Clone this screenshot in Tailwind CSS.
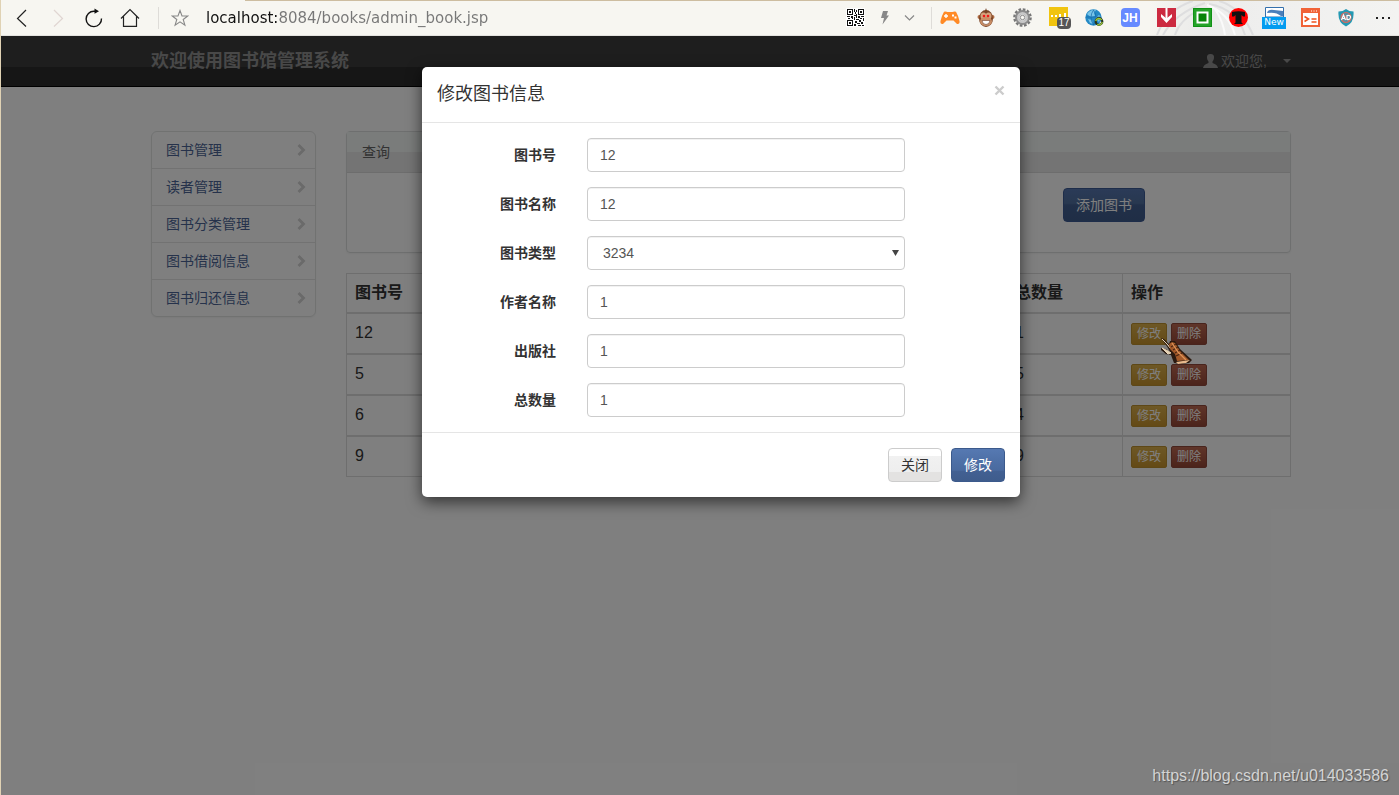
<!DOCTYPE html>
<html lang="zh-CN">
<head>
<meta charset="utf-8">
<title>图书馆管理系统</title>
<script src="https://cdn.jsdelivr.net/npm/@tailwindcss/browser@4"></script>
</head>
<body class="flex min-h-screen flex-col border-l border-[#e0d2b4] bg-white font-['Liberation_Sans','Noto_Sans_CJK_SC',sans-serif] text-sm text-[#333]">

<!-- Browser toolbar -->
<div class="relative flex h-9 shrink-0 items-center border-b border-[#e4e3df] bg-[#f7f6f1]">
  <div class="absolute top-0 right-0 left-[244px] h-px bg-[#cdbda0]"></div>
  <svg class="absolute top-px right-0 h-[34px] w-[250px]" viewBox="0 0 250 34" preserveAspectRatio="none" aria-hidden="true">
    <defs><linearGradient id="haze"><stop offset="0" stop-color="#e9e9e7" stop-opacity="0"/><stop offset=".2" stop-color="#ececeb"/><stop offset=".45" stop-color="#efefee"/><stop offset="1" stop-color="#f3f3f1"/></linearGradient></defs>
    <path d="M0 0h250v34H0z" fill="url(#haze)"/>
    <path d="M8 34Q18 8 44 0M14 34Q26 12 56 2M60 3Q88 8 96 34M70 0Q92 6 104 34M48 10Q30 20 26 34" fill="none" stroke="#dededf" stroke-width="2"/>
    <path d="M58 4Q80 12 86 34M66 8Q74 20 76 34" fill="none" stroke="#fafafa" stroke-width="2"/>
  </svg>
  <nav class="relative ml-[3px] flex items-center" aria-label="浏览器">
    <button aria-label="后退" class="flex w-9 justify-center"><svg width="18" height="18" viewBox="0 0 18 18" fill="none" stroke="#222" stroke-width="1.2"><path d="M13 1 4.500 9.500 13 17.500"/></svg></button>
    <button aria-label="前进" class="flex w-9 justify-center"><svg width="18" height="18" viewBox="0 0 18 18" fill="none" stroke="#e0d6d2" stroke-width="1.2"><path d="M5 1l8.500 8.500L5 17.500"/></svg></button>
    <button aria-label="刷新" class="flex w-9 justify-center"><svg width="20" height="20" viewBox="0 0 20 20" fill="none" stroke="#111" stroke-width="1.4"><path d="M17.500 10.500a7.700 7.700 0 1 1-7.500-7.300h2"/><path d="M10.500.5 15 3.200l-4.500 2.600z" fill="#111" stroke="none"/></svg></button>
    <button aria-label="主页" class="flex w-9 justify-center"><svg width="20" height="20" viewBox="0 0 20 20" fill="none" stroke="#222" stroke-width="1.2"><path d="M1 10.500 10 1.500l9 9M3.500 8.500v9.900h13V8.500"/></svg></button>
  </nav>
  <div class="relative ml-[10px] h-[22px] w-px bg-[#dedcd8]"></div>
  <button aria-label="收藏" class="relative ml-[3px] flex w-9 justify-center"><svg width="18" height="18" viewBox="0 0 18 18" fill="none" stroke="#888" stroke-width="1.100"><path d="m9 1.500 2 5.500h5.700l-4.500 3.500 1.700 5.700L9 12.800l-4.900 3.400 1.700-5.700L1.300 7H7z"/></svg></button>
  <input aria-label="地址" value="localhost:8084/books/admin_book.jsp" class="relative ml-2 h-7 min-w-0 flex-1 bg-[linear-gradient(90deg,#111_73px,#777_73px)] bg-clip-text pt-px font-['DejaVu_Sans',sans-serif] text-[15px] text-transparent outline-none">
  <div class="relative flex items-center">
    <button aria-label="二维码" class="flex w-8 justify-center"><svg width="19" height="19" viewBox="-1 -1 19 19" shape-rendering="crispEdges"><path d="M-1-1h19v19H-1z" fill="#fff"/><g fill="none" stroke="#111"><path d="M.5.5h5v5h-5zM11.500.5h5v5h-5zM.5 11.500h5v5h-5z"/></g><path fill="#111" d="M2 2h2v2H2zM13 2h2v2h-2zM2 13h2v2H2zM7 0h1v3H7zM9 1h1v2H9zM8 3h1v2H8zM7 6h2v1H7zM0 7h3v1H0zM4 7h2v2H4zM1 9h2v1H1zM7 8h1v3H7zM9 5h1v4H9zM11 7h2v2h-2zM14 7h3v1h-3zM13 9h2v1h-2zM16 9h1v3h-1zM9 10h3v1H9zM12 11h2v2h-2zM8 12h2v2H8zM10 14h3v1h-3zM14 13h2v2h-2zM7 15h2v2H7zM11 16h3v1h-3zM15 16h2v1h-2zM5 9h1v1H5z"/></svg></button>
    <button aria-label="闪电" class="flex w-7 justify-center"><svg width="10" height="14" viewBox="0 0 10 14"><path d="M3 0h5L6.500 4.500H9L2.500 13.500 4 7H1z" fill="#888"/></svg></button>
    <button aria-label="展开" class="flex w-5 justify-center"><svg width="11" height="8" viewBox="0 0 11 8" fill="none" stroke="#888" stroke-width="1.200"><path d="m1 1.500 4.500 4.500L10 1.500"/></svg></button>
    <div class="ml-3 h-[22px] w-px bg-[#dedcd8]"></div>
    <button aria-label="游戏" class="flex w-9 justify-center"><svg width="20" height="14" viewBox="0 0 20 14"><path d="M4 .7Q6 0 7.500 1h5Q14 0 16 .7q2.500 4.300 3.500 9.300.5 3.500-2.500 3L13.500 9.500h-7L3 13q-3 .5-2.500-3Q1.500 5 4 .7z" fill="#ff8a26"/><path d="M6 3v4M4 5h4" stroke="#fff" stroke-width="1.400"/><path d="M12 3.500h2v2h-2zM14.500 5.500h2v2h-2z" fill="#fff"/></svg></button>
    <button aria-label="猴子" class="flex w-9 justify-center"><svg width="18" height="20" viewBox="0 0 18 20"><path d="M9 0l1 3H8z" fill="#6b371b"/><circle cx="2.500" cy="9" r="2" fill="#b16d43"/><circle cx="15.500" cy="9" r="2" fill="#b16d43"/><ellipse cx="9" cy="10.500" rx="7" ry="8.500" fill="#7a4325"/><ellipse cx="6.500" cy="8" rx="3" ry="3.500" fill="#d6a27c"/><ellipse cx="11.500" cy="8" rx="3" ry="3.500" fill="#d6a27c"/><ellipse cx="9" cy="13.500" rx="6" ry="4.500" fill="#c98e66"/><path d="M5 12.500h8q-.5 4-4 4t-4-4z" fill="#fff" stroke="#70402a" stroke-width=".6"/><circle cx="7" cy="8" r="1.300" fill="#f01818"/><circle cx="11" cy="8" r="1.300" fill="#f01818"/></svg></button>
    <button aria-label="设置" class="flex w-9 justify-center"><svg width="19" height="19" viewBox="0 0 19 19"><circle cx="9.500" cy="9.500" r="8" fill="none" stroke="#777" stroke-width="2.600" stroke-dasharray="2.600 1.590"/><circle cx="9.500" cy="9.500" r="5.500" fill="#ddd" stroke="#8c8c8c" stroke-width="4"/><circle cx="9.500" cy="9.500" r="4.500" fill="none" stroke="#c8c8c8" stroke-width="2"/><circle cx="9.500" cy="9.500" r="2.200" fill="#f7f6f1" stroke="#777" stroke-width=".8"/></svg></button>
    <button aria-label="消息 17" class="relative flex h-[22px] w-9 justify-center"><svg width="19" height="19" viewBox="0 0 19 19"><path d="M0 0h19v19H0z" fill="#f1c40f"/><path d="M2 8h2v2H2zM6 8h2v2H6zM10 7h2v3h-2zM15 6h2v4h-2z" fill="#fff"/></svg><span class="absolute top-[10px] left-[17px] flex h-3 w-[14px] items-center justify-center rounded-sm bg-[#555] text-[10px] leading-none text-white">17</span></button>
    <button aria-label="网络" class="flex w-9 justify-center"><svg width="19" height="18" viewBox="0 0 19 18"><circle cx="8.500" cy="8.500" r="8.200" fill="#2489c5"/><path d="M2 5q4-5 9-4l-2 3 1 3-4 1-3-2zM10 9l4-3 2 2-2 5zM3 10l4 1 1 4-3-1z" fill="#78c4e8"/><path d="M1 8h15M8.500 1q-5 7 0 15M8.500 1q5 7 0 15" stroke="#1469a8" stroke-width=".7" fill="none"/><circle cx="14" cy="12.500" r="3.300" fill="none" stroke="#26351e" stroke-width="2.200"/><path d="M10.700 12a3.300 3.300 0 0 1 6-1M17.300 13a3.300 3.300 0 0 1-5 2.400" stroke="#9bc936" stroke-width="1.400" fill="none"/></svg></button>
    <button class="flex w-9 justify-center"><span class="flex size-[19px] items-center justify-center rounded-sm bg-[#668aff] text-xs leading-none font-bold text-white">JH</span></button>
    <button aria-label="下载" class="flex w-9 justify-center"><svg width="19" height="19" viewBox="0 0 19 19"><path d="M0 0h19v19H0z" fill="#cc2a40"/><path d="M9.500 0v13" stroke="#fff" stroke-width="2"/><path d="m4 6 5.500 4.500L15 6v3l-5.500 6L4 9z" fill="#fff"/></svg></button>
    <button aria-label="方框" class="flex w-9 justify-center"><svg width="19" height="19" viewBox="0 0 19 19"><path d="M0 0h19v19H0z" fill="#24a328"/><path d="M3.500 3.500h12v12h-12z" fill="#fff"/><path d="M5.500 5.500h8v8h-8z" fill="#078307"/><path d="M.5.500h18v18H.500z" fill="none" stroke="#119116"/></svg></button>
    <button aria-label="T" class="flex w-9 justify-center"><svg width="19" height="19" viewBox="0 0 19 19"><circle cx="9.500" cy="9.500" r="9.500" fill="#f00"/><path d="M3 4q6.500-1.500 13 0v4.500h-2L12.500 7v7.500L14 16H5l1.500-1.500V7L5 8.500H3z" fill="#111"/></svg></button>
    <button class="flex w-9 flex-col items-center"><svg width="19" height="10" viewBox="0 0 19 10"><path d="M.5.500h18V10H.500z" fill="#fff" stroke="#3470ad"/><path d="M2 6Q3 2 9 3l9 1v5h-2q-5-4.500-14-3z" fill="#4c7fbb"/></svg><span class="flex h-3 w-6 items-center justify-center bg-[#039cf0] font-['DejaVu_Sans',sans-serif] text-[9px] leading-none text-white">New</span></button>
    <button aria-label="终端" class="flex w-9 justify-center"><svg width="19" height="19" viewBox="0 0 19 19"><path d="M1 1h17v17H1z" fill="#fff" stroke="#f16337" stroke-width="2"/><path d="M1 1h17v4H1z" fill="#f16337"/><path d="M10 3h1M12.500 3h1M15 3h1" stroke="#fff"/><path d="m3.500 8.500 4 2.500-4 2.500M10.500 11h5M10.500 14h5" fill="none" stroke="#f0541f" stroke-width="1.600"/></svg></button>
    <button aria-label="广告拦截" class="flex w-9 justify-center"><svg width="16" height="18" viewBox="0 0 16 18"><path d="M8 0q3 2.500 7.500 2.500Q16.500 14 8 17.500-.5 14 .5 2.500 5 2.500 8 0z" fill="#2499b3"/><circle cx="8" cy="8.500" r="5" fill="#5990a3" stroke="#d36c63" stroke-width="1.200"/><path d="m4.500 5 7 7" stroke="#d36c63" stroke-width="1.200"/><path d="m3.500 11 2-5 2 5M4 9.500h3M9 6.500q4-.5 3.500 2T9 10.500z" fill="none" stroke="#fff" stroke-width="1.200"/></svg></button>
    <button aria-label="更多" class="flex w-[35px] justify-center pl-1"><svg width="15" height="4" viewBox="0 0 15 4"><path d="M0 1h2v2H0zM6 1h2v2H6zM12 1h2v2h-2z" fill="#222"/></svg></button>
  </div>
</div>

<!-- Page and its dialog -->
<div class="relative flex-1 overflow-hidden">
  <header class="h-[51px] border-b border-black bg-[linear-gradient(#3c3c3c_31px,#2c2c2c_31px)] pl-[42px]">
    <div class="mx-auto flex h-[50px] max-w-[1140px] items-center justify-between text-[#919191]">
      <a href="#" class="text-lg font-bold">欢迎使用图书馆管理系统</a>
      <button class="flex items-center gap-[3px] text-sm"><svg width="15" height="14" viewBox="0 0 15 14"><path d="M7.500 0q4 0 3.500 4-.3 2.500-1.500 3.500v1.500q5 1.500 5.500 5H0q.5-3.500 5.500-5V7.500Q4.300 6.500 4 4q-.5-4 3.500-4z" fill="currentColor"/></svg>欢迎您,<svg class="ml-[13px]" width="8" height="4" viewBox="0 0 8 4"><path d="M0 0h8L4 4z" fill="currentColor"/></svg></button>
    </div>
  </header>

  <div class="pl-[42px]">
    <div class="mx-auto mt-11 flex max-w-[1140px] items-start gap-[30px]">
      <nav class="w-[165px] shrink-0 divide-y divide-[#e4e4e4] rounded-md border border-[#e2e4e3] text-[#4c6596] shadow-xs" aria-label="菜单">
        <a href="#" class="box-content flex h-9 items-center justify-between pr-[9px] pl-[14px]">图书管理<svg width="9" height="12" viewBox="0 0 9 12"><path d="m1.500 1 5 5-5 5" fill="none" stroke="#d4d4d4" stroke-width="2.800"/></svg></a>
        <a href="#" class="box-content flex h-9 items-center justify-between pr-[9px] pl-[14px]">读者管理<svg width="9" height="12" viewBox="0 0 9 12"><path d="m1.500 1 5 5-5 5" fill="none" stroke="#d4d4d4" stroke-width="2.800"/></svg></a>
        <a href="#" class="box-content flex h-9 items-center justify-between pr-[9px] pl-[14px]">图书分类管理<svg width="9" height="12" viewBox="0 0 9 12"><path d="m1.500 1 5 5-5 5" fill="none" stroke="#d4d4d4" stroke-width="2.800"/></svg></a>
        <a href="#" class="box-content flex h-9 items-center justify-between pr-[9px] pl-[14px]">图书借阅信息<svg width="9" height="12" viewBox="0 0 9 12"><path d="m1.500 1 5 5-5 5" fill="none" stroke="#d4d4d4" stroke-width="2.800"/></svg></a>
        <a href="#" class="box-content flex h-9 items-center justify-between pr-[9px] pl-[14px]">图书归还信息<svg width="9" height="12" viewBox="0 0 9 12"><path d="m1.500 1 5 5-5 5" fill="none" stroke="#d4d4d4" stroke-width="2.800"/></svg></a>
      </nav>

      <main class="min-w-0 flex-1">
        <section class="h-[122px] rounded-sm border border-[#dcdfde] shadow-xs">
          <h2 class="flex h-[41px] items-center border-b border-[#dadada] bg-[linear-gradient(#f5f8f6_20px,#e8e8e8_20px)] pl-[15px] text-sm text-[#666]">查询</h2>
          <div class="flex justify-end pt-[15px] pr-[145px]">
            <button class="h-[34px] rounded-sm border border-[#3c5a94] bg-[linear-gradient(#5676b0,#50709f_45%,#426092_50%,#3f5c8c)] px-[12px] text-sm text-white">添加图书</button>
          </div>
        </section>

        <table class="mt-5 w-full table-fixed border-separate border-spacing-0 border-r border-b border-[#dcdcdc] text-base text-[#333]">
          <colgroup><col><col class="w-[115px]"><col class="w-[168px]"></colgroup>
          <thead>
            <tr class="h-[39px] text-left">
              <th class="border-t border-l border-[#dcdcdc] px-2">图书号</th>
              <th class="border-t border-[#dcdcdc] px-2">总数量</th>
              <th class="border-t border-l border-[#dcdcdc] px-2">操作</th>
            </tr>
          </thead>
          <tbody>
            <tr class="h-[41px]">
              <td class="border-t-2 border-l border-[#dcdcdc] px-2 pb-0.5">12</td>
              <td class="border-t-2 border-[#dcdcdc] px-2 pb-0.5">1</td>
              <td class="border-t-2 border-l border-[#dcdcdc] px-2"><div class="flex gap-1 text-xs text-white"><button class="h-[22px] rounded-xs border border-[#bd902e] bg-linear-to-b from-[#dcb04a] to-[#c8942c] px-[5px]">修改</button><button class="h-[22px] rounded-xs border border-[#90483a] bg-linear-to-b from-[#bf6a52] to-[#984837] px-[5px]">删除</button></div></td>
            </tr>
            <tr class="h-[41px]">
              <td class="border-t-2 border-l border-[#dcdcdc] px-2 pb-0.5">5</td>
              <td class="border-t-2 border-[#dcdcdc] px-2 pb-0.5">5</td>
              <td class="border-t-2 border-l border-[#dcdcdc] px-2"><div class="flex gap-1 text-xs text-white"><button class="h-[22px] rounded-xs border border-[#bd902e] bg-linear-to-b from-[#dcb04a] to-[#c8942c] px-[5px]">修改</button><button class="h-[22px] rounded-xs border border-[#90483a] bg-linear-to-b from-[#bf6a52] to-[#984837] px-[5px]">删除</button></div></td>
            </tr>
            <tr class="h-[41px]">
              <td class="border-t-2 border-l border-[#dcdcdc] px-2 pb-0.5">6</td>
              <td class="border-t-2 border-[#dcdcdc] px-2 pb-0.5">4</td>
              <td class="border-t-2 border-l border-[#dcdcdc] px-2"><div class="flex gap-1 text-xs text-white"><button class="h-[22px] rounded-xs border border-[#bd902e] bg-linear-to-b from-[#dcb04a] to-[#c8942c] px-[5px]">修改</button><button class="h-[22px] rounded-xs border border-[#90483a] bg-linear-to-b from-[#bf6a52] to-[#984837] px-[5px]">删除</button></div></td>
            </tr>
            <tr class="h-[41px]">
              <td class="border-t-2 border-l border-[#dcdcdc] px-2 pb-0.5">9</td>
              <td class="border-t-2 border-[#dcdcdc] px-2 pb-0.5">9</td>
              <td class="border-t-2 border-l border-[#dcdcdc] px-2"><div class="flex gap-1 text-xs text-white"><button class="h-[22px] rounded-xs border border-[#bd902e] bg-linear-to-b from-[#dcb04a] to-[#c8942c] px-[5px]">修改</button><button class="h-[22px] rounded-xs border border-[#90483a] bg-linear-to-b from-[#bf6a52] to-[#984837] px-[5px]">删除</button></div></td>
            </tr>
          </tbody>
        </table>
      </main>
    </div>
  </div>

  <div class="absolute inset-0 bg-black/50 pt-[31px] pl-[42px]">
    <form role="dialog" aria-labelledby="dialog-title" class="mx-auto max-w-[598px] rounded-[5px] bg-white shadow-[0_5px_15px_rgba(0,0,0,0.6)]">
      <div class="flex h-14 items-start justify-between border-b border-[#e5e5e5] px-[15px] pt-[14px]">
        <h1 id="dialog-title" class="text-lg leading-[26px]">修改图书信息</h1>
        <button type="button" aria-label="关闭对话框" class="mt-1"><svg width="11" height="11" viewBox="0 0 11 11"><path d="m1.500 1.500 8 8m0-8-8 8" stroke="#ccc" stroke-width="2.400"/></svg></button>
      </div>
      <div class="grid grid-cols-[134px_318px] items-center gap-x-[31px] gap-y-[15px] py-[15px] text-[#555]">
        <label for="no" class="text-right font-bold text-[#333]">图书号</label>
        <input id="no" value="12" class="h-[34px] rounded-sm border border-[#ccc] bg-white px-3 text-sm inset-shadow-2xs">
        <label for="name" class="text-right font-bold text-[#333]">图书名称</label>
        <input id="name" value="12" class="h-[34px] rounded-sm border border-[#ccc] bg-white px-3 text-sm inset-shadow-2xs">
        <label for="type" class="text-right font-bold text-[#333]">图书类型</label>
        <div class="relative">
          <select id="type" class="block h-[34px] w-full appearance-none rounded-sm border border-[#ccc] bg-white px-[15px] text-sm inset-shadow-2xs"><option>3234</option></select>
          <svg class="pointer-events-none absolute top-[14px] right-[6px]" width="7" height="6" viewBox="0 0 7 6"><path d="M0 0h7L3.500 6z" fill="#444"/></svg>
        </div>
        <label for="author" class="text-right font-bold text-[#333]">作者名称</label>
        <input id="author" value="1" class="h-[34px] rounded-sm border border-[#ccc] bg-white px-3 text-sm inset-shadow-2xs">
        <label for="press" class="text-right font-bold text-[#333]">出版社</label>
        <input id="press" value="1" class="h-[34px] rounded-sm border border-[#ccc] bg-white px-3 text-sm inset-shadow-2xs">
        <label for="total" class="text-right font-bold text-[#333]">总数量</label>
        <input id="total" value="1" class="h-[34px] rounded-sm border border-[#ccc] bg-white px-3 text-sm inset-shadow-2xs">
      </div>
      <div class="flex justify-end gap-[9px] border-t border-[#e5e5e5] p-[15px]">
        <button type="button" class="h-[34px] w-[54px] rounded-sm border border-[#ccc] bg-[linear-gradient(#fff_7px,#f1f1f1_7px,#eee_23px,#e3e2e1_23px)] text-sm">关闭</button>
        <button type="submit" class="h-[34px] w-[54px] rounded-sm border border-[#3c5a8c] bg-[linear-gradient(#5679b2,#4f71a8_33%,#4a6a9f_66%,#426092_70%,#3f5c8c)] text-sm text-white">修改</button>
      </div>
    </form>
  </div>

  <!-- Gauntlet mouse pointer -->
  <svg class="absolute top-[302px] left-[1160px]" width="32" height="28" viewBox="0 0 32 28" aria-hidden="true">
    <path d="M0 0 3 1l5 5 1-3h5l5 8 12 11-3 3-8 1-7-1-3-8-5-1-5-4 0-2 5 1 4 3-2-4z" fill="#2b1a10"/>
    <path d="M1 1l6 6 2 3M1 10l6 3 3 2-3 1z" fill="#e6d3b5" stroke="#e6d3b5" stroke-width="1"/>
    <path d="m8 6 3-2 3 1 5 8 9 9-12 1-2-7-5-5z" fill="#a45a2a"/>
    <path d="m10 9 5-3M12 12l5-3M14 15l5-3M15 18l6-3" stroke="#4a2411" stroke-width="1.200"/>
    <path d="m11 5 6 9 8 8" stroke="#dc9258" stroke-width="1.300" fill="none"/>
    <path d="m15 24 14-2-4 3-8 1z" fill="#e8b98c"/>
  </svg>
  <p class="absolute right-[10px] bottom-[7px] text-base text-[#d4d4d4] [text-shadow:1px_1px_1px_#555]">https://blog.csdn.net/u014033586</p>
</div>
</body>
</html>
